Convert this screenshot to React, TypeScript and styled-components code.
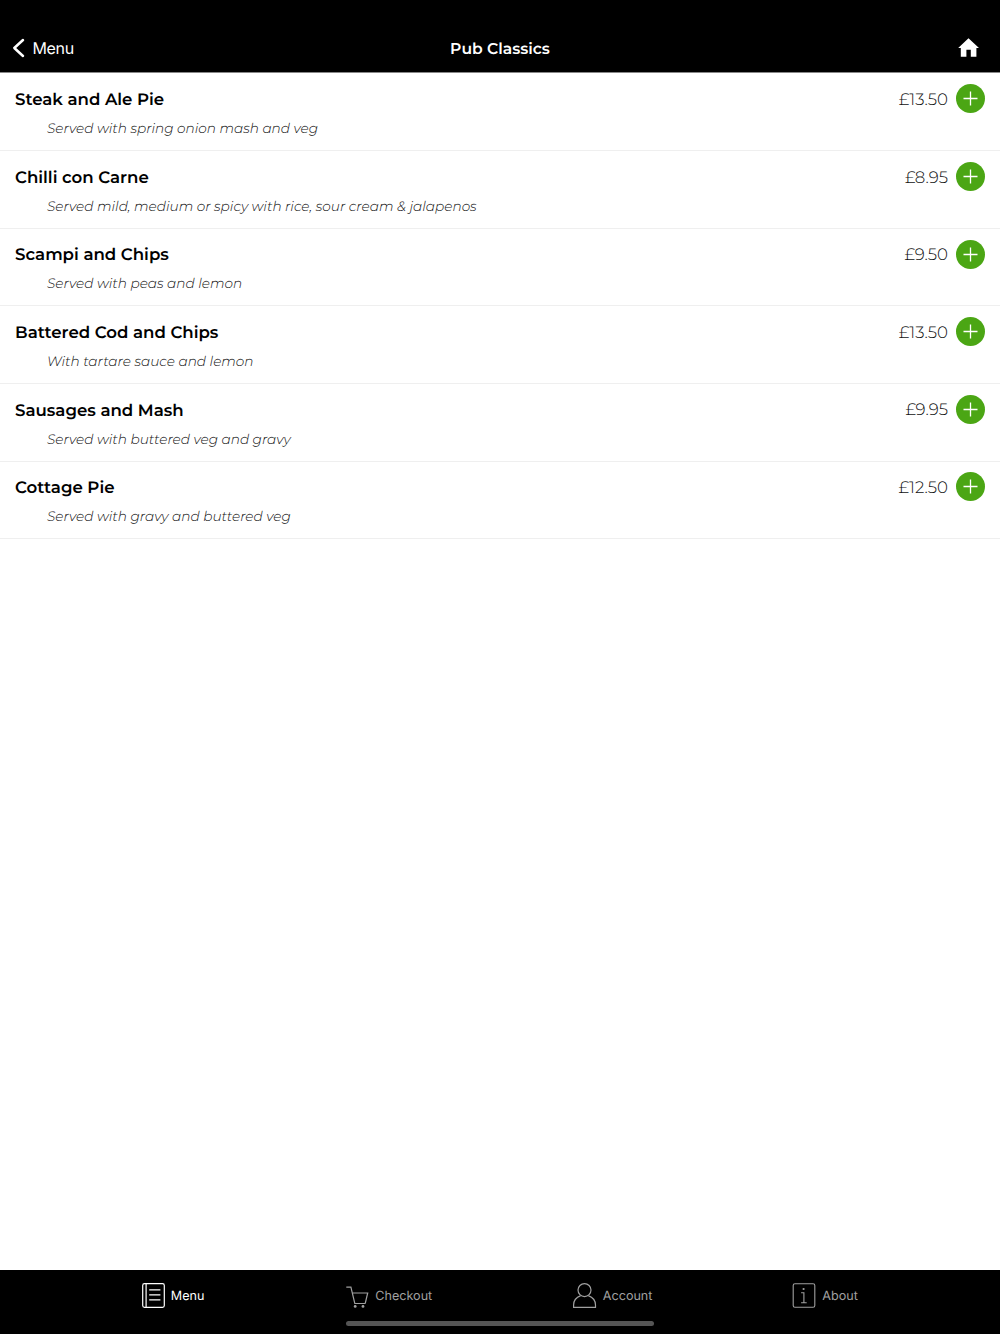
import styled, { createGlobalStyle } from "styled-components"

const GlobalStyle = createGlobalStyle`
    * {
        box-sizing: border-box;
    }
    body {
        margin: 0;
        background: #fff;
        font-family: Montserrat, Inter, "Liberation Sans", sans-serif;
        text-rendering: geometricPrecision;
    }
    button {
        border: 0;
        padding: 0;
        background: none;
        font: inherit;
        color: inherit;
        text-rendering: inherit;
    }
    h1, h2, p {
        margin: 0;
    }
    svg {
        display: block;
        flex: none;
    }
`

const Screen = styled.div`
    display: flex;
    flex-direction: column;
    height: 1334px;
    overflow: hidden;
`

const Header = styled.header`
    display: grid;
    grid-template-columns: 1fr auto 1fr;
    align-items: center;
    height: 73px;
    padding: 24px 20px 0 12px;
    border-bottom: 1px solid #888;
    background: #000;
    color: #fff;
`

const BackButton = styled.button`
    display: flex;
    align-items: center;
    gap: 7.5px;
    justify-self: start;
    font-family: Inter, sans-serif;
    font-size: 16px;
    letter-spacing: -0.35px;
    line-height: 20px;
`

const Title = styled.h1`
    font-size: 15.6px;
    font-weight: 600;
    line-height: 20px;
    margin-left: 8px;
    padding-top: 1px;
`

const HomeButton = styled.button`
    justify-self: end;
`

const List = styled.main`
    flex: 1;
    padding-top: 0.4px;
`

const Item = styled.article`
    height: 77.65px;
    padding: 10.9px 15px 0;
    border-bottom: 1px solid #efefef;
`

const ItemTop = styled.div`
    display: flex;
    align-items: center;
    height: 29px;
`

const Name = styled.h2`
    flex: 1;
    padding-top: 2.8px;
    font-size: 16.6px;
    font-weight: 600;
    line-height: 24px;
`

const Price = styled.span`
    margin-right: 8px;
    padding-top: 2.2px;
    font-size: 16.6px;
    font-weight: 300;
    line-height: 24px;
    color: #111;
`

const AddButton = styled.button`
    display: grid;
    place-items: center;
    width: 29px;
    height: 29px;
    border-radius: 50%;
    background: #4ba614;
    color: #fff;
`

const Description = styled.p`
    padding: 5.9px 0 0 32px;
    font-size: 13.67px;
    font-style: italic;
    font-weight: 300;
    line-height: 20px;
    color: #111;
`

const TabBar = styled.nav`
    height: 64px;
    background: #000;
    display: flex;
    flex-direction: column;
    align-items: center;
    justify-content: space-between;
    padding: 12px 0 8px;
`

const Tabs = styled.div`
    display: grid;
    grid-template-columns: 204.5px 226.5px 219.5px 90px;
    width: 717px;
`

const Tab = styled.button<{ $active?: boolean }>`
    display: flex;
    align-items: center;
    gap: 6.3px;
    height: 27px;
    font-family: Inter, sans-serif;
    font-size: 12.6px;
    color: ${props => props.$active ? "#fff" : "#a0a0a0"};
`

const TabLabel = styled.span`
    padding-top: 2.6px;
    line-height: 17px;
`

const HomeIndicator = styled.div`
    width: 308px;
    height: 5px;
    border-radius: 3px;
    background: #555;
`

const items = [
    { name: "Steak and Ale Pie", description: "Served with spring onion mash and veg", price: "£13.50" },
    { name: "Chilli con Carne", description: "Served mild, medium or spicy with rice, sour cream & jalapenos", price: "£8.95" },
    { name: "Scampi and Chips", description: "Served with peas and lemon", price: "£9.50" },
    { name: "Battered Cod and Chips", description: "With tartare sauce and lemon", price: "£13.50" },
    { name: "Sausages and Mash", description: "Served with buttered veg and gravy", price: "£9.95" },
    { name: "Cottage Pie", description: "Served with gravy and buttered veg", price: "£12.50" },
]

const BackIcon = () => (
    <svg width="13" height="20" viewBox="0 0 13 20" fill="none" stroke="currentColor" strokeWidth="2.5" strokeLinecap="round" strokeLinejoin="round">
        <path d="M11 2 2.3 10 11 18" />
    </svg>
)

const HomeIcon = () => (
    <svg width="22" height="20" viewBox="0 0 22 20" fill="currentColor">
        <path d="M10.5.3 21 9.9H18.4V18.8H12.8V11.8H8.4V18.8H2.8V9.9H.2Z" />
    </svg>
)

const PlusIcon = () => (
    <svg width="15" height="15" viewBox="0 0 15 15" stroke="currentColor" strokeWidth="1.3">
        <path d="M7.5.5v14M.5 7.5h14" />
    </svg>
)

const MenuIcon = () => (
    <svg width="23" height="26" viewBox="0 0 23 26" fill="none" stroke="currentColor" strokeWidth="1.2">
        <rect x=".7" y=".7" width="21.6" height="23.6" rx="1.8" />
        <path d="M4.1.7v23.6M7.2 6.8h11.2M7.2 11.8h11.2M7.2 16.8h11.2" />
    </svg>
)

const CartIcon = () => (
    <svg width="23" height="26" viewBox="0 0 23 26" fill="none" stroke="currentColor" strokeWidth="1.2">
        <path d="M.3 4.2h4.6L8.8 20.5h10.4M6.3 10h15.4l-2.5 10.5" />
        <circle cx="9.2" cy="23.4" r="1.4" fill="currentColor" stroke="none" />
        <circle cx="17" cy="23.4" r="1.4" fill="currentColor" stroke="none" />
    </svg>
)

const AccountIcon = () => (
    <svg width="24" height="26" viewBox="0 0 24 26" fill="none" stroke="currentColor" strokeWidth="1.2">
        <circle cx="11.5" cy="7.1" r="6.5" />
        <path d="M7.7 12.6C3.4 14.2.6 17.8.6 22v2.3h21.9V22c0-4.2-2.8-7.8-7.2-9.4" />
    </svg>
)

const AboutIcon = () => (
    <svg width="24" height="26" viewBox="0 0 24 26" fill="none" stroke="currentColor" strokeWidth="1.1">
        <rect x="1.2" y=".7" width="21.6" height="23.6" rx="1.8" />
        <path d="M9.1 9.8h2.8v10M9.1 19.8h5.6" />
        <circle cx="11.6" cy="6" r="1.1" fill="currentColor" stroke="none" />
    </svg>
)

const App = () => {
    return (
        <Screen>
            <GlobalStyle />
            <Header>
                <BackButton><BackIcon />Menu</BackButton>
                <Title>Pub Classics</Title>
                <HomeButton aria-label="Home"><HomeIcon /></HomeButton>
            </Header>
            <List>
                {items.map(item => (
                    <Item key={item.name}>
                        <ItemTop>
                            <Name>{item.name}</Name>
                            <Price>{item.price}</Price>
                            <AddButton aria-label="Add"><PlusIcon /></AddButton>
                        </ItemTop>
                        <Description>{item.description}</Description>
                    </Item>
                ))}
            </List>
            <TabBar>
                <Tabs>
                    <Tab $active><MenuIcon /><TabLabel>Menu</TabLabel></Tab>
                    <Tab><CartIcon /><TabLabel>Checkout</TabLabel></Tab>
                    <Tab><AccountIcon /><TabLabel>Account</TabLabel></Tab>
                    <Tab><AboutIcon /><TabLabel>About</TabLabel></Tab>
                </Tabs>
                <HomeIndicator />
            </TabBar>
        </Screen>
    )
}

export default App
